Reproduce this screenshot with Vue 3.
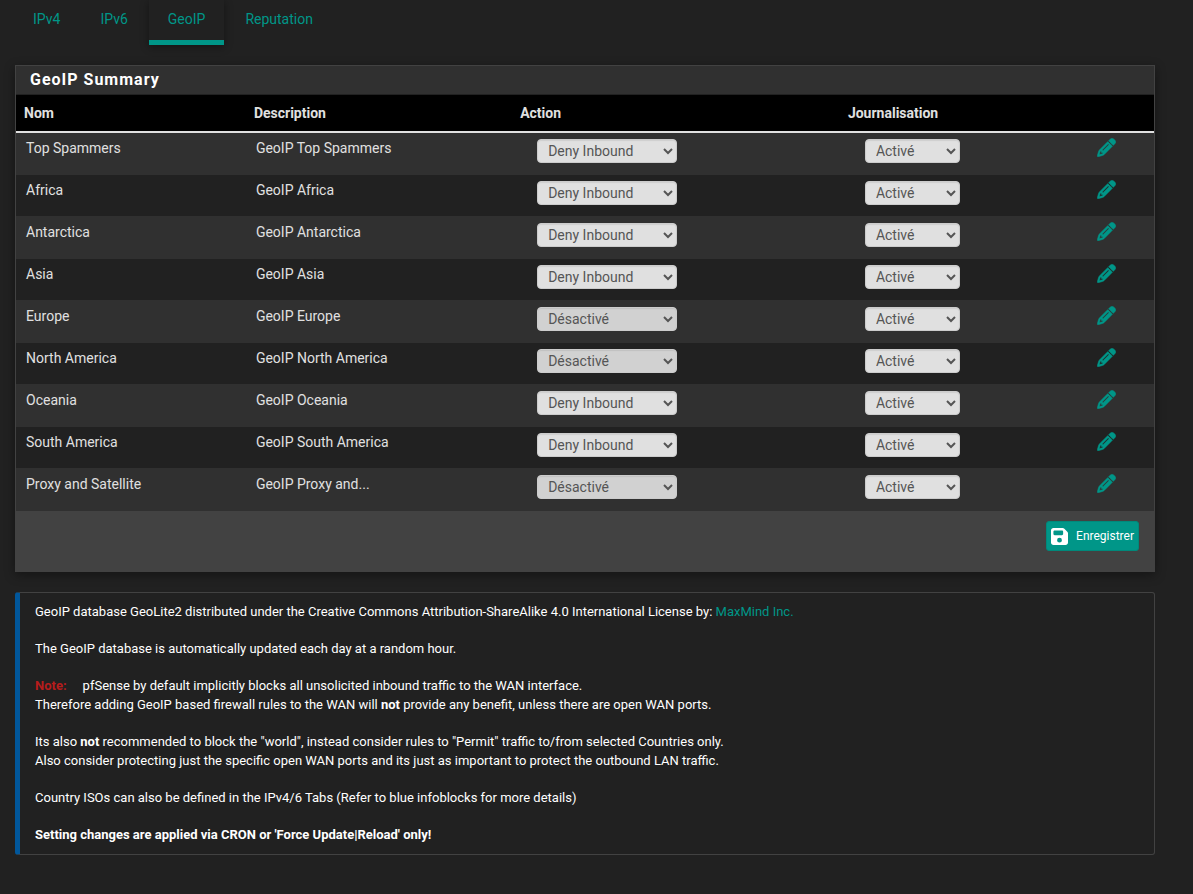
<script setup>
import { ref } from 'vue'

const tabs = ['IPv4', 'IPv6', 'GeoIP', 'Reputation']
const activeTab = 'GeoIP'

const actions = ['Désactivé', 'Deny Inbound', 'Deny Outbound', 'Deny Both']
const logging = ['Activé', 'Désactivé']

const rows = ref([
  { name: 'Top Spammers', description: 'GeoIP Top Spammers', action: 'Deny Inbound', log: 'Activé' },
  { name: 'Africa', description: 'GeoIP Africa', action: 'Deny Inbound', log: 'Activé' },
  { name: 'Antarctica', description: 'GeoIP Antarctica', action: 'Deny Inbound', log: 'Activé' },
  { name: 'Asia', description: 'GeoIP Asia', action: 'Deny Inbound', log: 'Activé' },
  { name: 'Europe', description: 'GeoIP Europe', action: 'Désactivé', log: 'Activé' },
  { name: 'North America', description: 'GeoIP North America', action: 'Désactivé', log: 'Activé' },
  { name: 'Oceania', description: 'GeoIP Oceania', action: 'Deny Inbound', log: 'Activé' },
  { name: 'South America', description: 'GeoIP South America', action: 'Deny Inbound', log: 'Activé' },
  { name: 'Proxy and Satellite', description: 'GeoIP Proxy and...', action: 'Désactivé', log: 'Activé' },
])
</script>

<template>
  <div class="page">
    <nav class="tabs">
      <a
        v-for="tab in tabs"
        :key="tab"
        href="#"
        class="tab"
        :class="{ active: tab === activeTab }"
        :aria-current="tab === activeTab ? 'page' : undefined"
      >{{ tab }}</a>
    </nav>

    <form class="panel" @submit.prevent>
      <h2 class="panel-title">GeoIP Summary</h2>
      <table class="summary">
        <thead>
          <tr>
            <th class="col-name">Nom</th>
            <th class="col-description">Description</th>
            <th class="col-action">Action</th>
            <th class="col-log">Journalisation</th>
            <th class="col-edit"></th>
          </tr>
        </thead>
        <tbody>
          <tr v-for="row in rows" :key="row.name">
            <td>{{ row.name }}</td>
            <td>{{ row.description }}</td>
            <td class="field">
              <select
                v-model="row.action"
                class="select action"
                :class="{ off: row.action === 'Désactivé' }"
                :aria-label="`Action ${row.name}`"
              >
                <option v-for="a in actions" :key="a">{{ a }}</option>
              </select>
            </td>
            <td class="field">
              <select v-model="row.log" class="select log" :aria-label="`Journalisation ${row.name}`">
                <option v-for="l in logging" :key="l">{{ l }}</option>
              </select>
            </td>
            <td class="edit">
              <a href="#" class="edit-link" :aria-label="`Modifier ${row.name}`">
                <svg viewBox="-6 -6 524 524" width="19" height="19" aria-hidden="true">
                  <path fill="currentColor" stroke="currentColor" stroke-width="12" d="M410.3 231l11.3-11.3-33.9-33.9-62.1-62.1L291.7 89.8l-11.3 11.3-22.6 22.6L58.6 322.9c-10.4 10.4-18 23.3-22.2 37.4L1 480.7c-2.5 8.4-.2 17.5 6.1 23.7s15.3 8.5 23.7 6.1l120.3-35.4c14.1-4.2 27-11.8 37.4-22.2L387.7 253.7 410.3 231zM160 399.4l-9.1 22.7c-4 3.1-8.5 5.4-13.3 6.9L59.4 452l23-78.1c1.4-4.9 3.8-9.4 6.9-13.3l22.7-9.1v32c0 8.8 7.2 16 16 16h32zM362.7 18.7L348.3 33.2 325.7 55.8 314.3 67.1l33.9 33.9 62.1 62.1 33.9 33.9 11.3-11.3 22.6-22.6 14.5-14.5c25-25 25-65.5 0-90.5L453.3 18.7c-25-25-65.5-25-90.5 0zm-47.4 168l-144 144c-6.2 6.2-16.4 6.2-22.6 0s-6.2-16.4 0-22.6l144-144c6.2-6.2 16.4-6.2 22.6 0s6.2 16.4 0 22.6z" />
                </svg>
              </a>
            </td>
          </tr>
        </tbody>
      </table>
      <div class="panel-footer">
        <button type="submit" class="save">
          <svg viewBox="0 32 448 448" width="17" height="17" aria-hidden="true">
            <path fill="currentColor" d="M64 32C28.7 32 0 60.7 0 96V416c0 35.3 28.7 64 64 64H384c35.3 0 64-28.7 64-64V173.3c0-17-6.7-33.3-18.7-45.3L352 50.7C340 38.7 323.7 32 306.7 32H64zm0 96c0-17.7 14.3-32 32-32H288c17.7 0 32 14.3 32 32v64c0 17.7-14.3 32-32 32H96c-17.7 0-32-14.3-32-32V128zM224 288a64 64 0 1 1 0 128 64 64 0 1 1 0-128z" />
          </svg>
          <span>Enregistrer</span>
        </button>
      </div>
    </form>

    <section class="info">
      <p>GeoIP database GeoLite2 distributed under the Creative Commons Attribution-ShareAlike 4.0 International License by: <a href="#">MaxMind Inc.</a></p>
      <p>The GeoIP database is automatically updated each day at a random hour.</p>
      <p>
        <strong class="note">Note:</strong>pfSense by default implicitly blocks all unsolicited inbound traffic to the WAN interface.<br>
        Therefore adding GeoIP based firewall rules to the WAN will <strong>not</strong> provide any benefit, unless there are open WAN ports.
      </p>
      <p>
        Its also <strong>not</strong> recommended to block the "world", instead consider rules to "Permit" traffic to/from selected Countries only.<br>
        Also consider protecting just the specific open WAN ports and its just as important to protect the outbound LAN traffic.
      </p>
      <p>Country ISOs can also be defined in the IPv4/6 Tabs (Refer to blue infoblocks for more details)</p>
      <p><strong>Setting changes are applied via CRON or 'Force Update|Reload' only!</strong></p>
    </section>
  </div>
</template>

<style>
body {
  margin: 0;
  background: #212121;
}
</style>

<style scoped>
.page {
  padding: 0 38px 39px 15px;
  font-family: Roboto, sans-serif;
  font-size: 13px;
  line-height: 19px;
  color: #fff;
}

a {
  color: #009688;
  text-decoration: none;
}

.tabs {
  display: flex;
  gap: 2px;
  margin-bottom: 20px;
  font-size: 14px;
}

.tab {
  padding: 10px 19px 11px;
  border-bottom: 5px solid transparent;
}

.tab:first-child {
  padding-left: 18px;
}

.tab.active {
  border-bottom-color: #009688;
  box-shadow: 0 2px 8px rgba(0, 0, 0, 0.4);
}

.panel {
  border: 1px solid #424242;
  background: #303030;
  box-shadow: 0 3px 10px rgba(0, 0, 0, 0.4);
}

.panel-title {
  margin: 0;
  padding: 4px 14px 5px;
  border-bottom: 1px solid #212121;
  font-size: 16px;
  font-weight: 700;
  letter-spacing: 1px;
}

.summary {
  width: 100%;
  table-layout: fixed;
  border-collapse: separate;
  border-spacing: 0;
  color: #e0e0e0;
  font-size: 14px;
}

th,
td {
  box-sizing: border-box;
}

th {
  height: 38px;
  padding: 0 8px;
  border-bottom: 2px solid #e0e0e0;
  background: #000;
  text-align: left;
  font-weight: 700;
}

.col-name { width: 20.2%; }
.col-description { width: 23.4%; }
.col-action { width: 28.8%; }
.col-log { width: 20%; }

td {
  height: 42px;
  padding: 6px 10px 0;
  vertical-align: top;
}

tbody tr:nth-child(even) td {
  background: #212121;
  border-bottom: 1px solid #303030;
}

.field {
  padding: 6px 25px 0;
}

.select {
  display: block;
  height: 24px;
  padding: 0 6px;
  border: 1px solid #ccc;
  border-radius: 4px;
  background-color: #e0e0e0;
  box-shadow: inset 0 1px 1px rgba(0, 0, 0, 0.08);
  color: #555;
  font-family: inherit;
  font-size: 14px;
}

.action { width: 140px; }
.log { width: 95px; }

.select.off {
  background-color: #d1d1d1;
}

.edit {
  padding: 5px 38px 0 0;
}

.edit-link {
  display: flex;
  justify-content: flex-end;
}

.panel-footer {
  display: flex;
  justify-content: flex-end;
  padding: 10px 15px 20px;
  background: #424242;
}

.save {
  display: flex;
  align-items: center;
  gap: 8px;
  height: 30px;
  padding: 0 4px;
  border: 1px solid #00897b;
  border-radius: 3px;
  background: #009688;
  color: #fff;
  font-family: inherit;
  font-size: 12px;
}

.info {
  margin-top: 20px;
  padding: 9px 15px 10px;
  border: 1px solid #424242;
  border-left: 5px solid #01579b;
  border-radius: 3px;
}

.info p {
  margin: 0 0 18px;
}

.info p:last-child {
  margin-bottom: 0;
}

.note {
  margin-right: 16px;
  color: #b71c1c;
}
</style>
